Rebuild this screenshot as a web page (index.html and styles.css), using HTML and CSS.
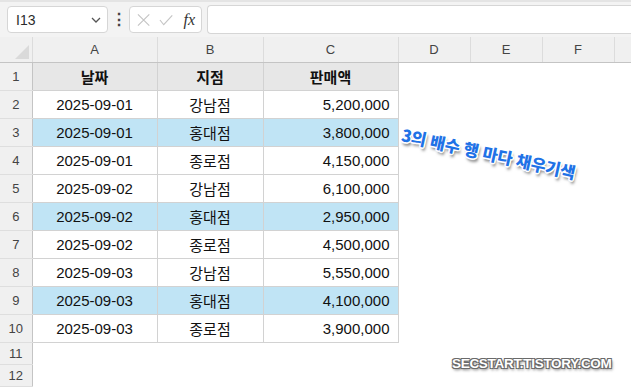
FILE: index.html
```html
<!DOCTYPE html>
<html lang="ko">
<head>
    <meta charset="UTF-8">
    <title>3의 배수 행 채우기</title>
    <link rel="stylesheet" href="styles.css">
</head>
<body>
    <div class="sheet">
        <div class="formula-bar">
            <div class="name-box">
                <span>I13</span>
                <svg class="chevron" width="10" height="6" viewBox="0 0 10 6"><path d="M1 1l4 4 4-4" fill="none" stroke="#555" stroke-width="1.3"/></svg>
            </div>
            <div class="dots">&#8942;</div>
            <div class="fx-box">
                <svg width="14" height="14" viewBox="0 0 14 14"><path d="M1 1l12 12M13 1L1 13" stroke="#c4c4c4" stroke-width="1.2"/></svg>
                <svg width="15" height="12" viewBox="0 0 15 12"><path d="M1 6l4 5L14 1" fill="none" stroke="#c4c4c4" stroke-width="1.2"/></svg>
                <span class="fx">fx</span>
            </div>
            <div class="formula-input"></div>
        </div>

        <table class="grid">
            <colgroup>
                <col class="c-rh">
                <col class="c-a">
                <col class="c-b">
                <col class="c-c">
                <col class="c-d">
                <col class="c-d">
                <col class="c-d">
                <col>
            </colgroup>
            <thead>
                <tr class="col-head">
                    <th class="corner"><span class="tri"></span></th>
                    <th>A</th><th>B</th><th>C</th><th>D</th><th>E</th><th>F</th><th></th>
                </tr>
            </thead>
            <tbody>
                <tr>
                    <th>1</th>
                    <td class="cell title">날짜</td><td class="cell title">지점</td><td class="cell title">판매액</td>
                    <td></td><td></td><td></td><td></td>
                </tr>
                <tr>
                    <th>2</th>
                    <td class="cell">2025-09-01</td><td class="cell">강남점</td><td class="cell num">5,200,000</td>
                    <td></td><td></td><td></td><td></td>
                </tr>
                <tr class="hl">
                    <th>3</th>
                    <td class="cell">2025-09-01</td><td class="cell">홍대점</td><td class="cell num">3,800,000</td>
                    <td></td><td></td><td></td><td></td>
                </tr>
                <tr>
                    <th>4</th>
                    <td class="cell">2025-09-01</td><td class="cell">종로점</td><td class="cell num">4,150,000</td>
                    <td></td><td></td><td></td><td></td>
                </tr>
                <tr>
                    <th>5</th>
                    <td class="cell">2025-09-02</td><td class="cell">강남점</td><td class="cell num">6,100,000</td>
                    <td></td><td></td><td></td><td></td>
                </tr>
                <tr class="hl">
                    <th>6</th>
                    <td class="cell">2025-09-02</td><td class="cell">홍대점</td><td class="cell num">2,950,000</td>
                    <td></td><td></td><td></td><td></td>
                </tr>
                <tr>
                    <th>7</th>
                    <td class="cell">2025-09-02</td><td class="cell">종로점</td><td class="cell num">4,500,000</td>
                    <td></td><td></td><td></td><td></td>
                </tr>
                <tr>
                    <th>8</th>
                    <td class="cell">2025-09-03</td><td class="cell">강남점</td><td class="cell num">5,550,000</td>
                    <td></td><td></td><td></td><td></td>
                </tr>
                <tr class="hl">
                    <th>9</th>
                    <td class="cell">2025-09-03</td><td class="cell">홍대점</td><td class="cell num">4,100,000</td>
                    <td></td><td></td><td></td><td></td>
                </tr>
                <tr>
                    <th>10</th>
                    <td class="cell">2025-09-03</td><td class="cell">종로점</td><td class="cell num">3,900,000</td>
                    <td></td><td></td><td></td><td></td>
                </tr>
                <tr class="short">
                    <th>11</th>
                    <td></td><td></td><td></td><td></td><td></td><td></td><td></td>
                </tr>
                <tr class="short">
                    <th>12</th>
                    <td></td><td></td><td></td><td></td><td></td><td></td><td></td>
                </tr>
            </tbody>
        </table>

        <div class="note">3의 배수 행 마다 채우기색</div>
        <div class="watermark">SECSTART.TISTORY.COM</div>
    </div>
</body>
</html>
```

FILE: styles.css
```css
html, body {
    margin: 0;
    height: 100%;
    overflow: hidden;
    background-color: #fff;
    font-family: "Liberation Sans", "Noto Sans CJK KR", sans-serif;
    color: #111;
}

.sheet {
    position: relative;
    width: 631px;
    height: 387px;
    overflow: hidden;
}

/* formula bar */
.formula-bar {
    display: flex;
    align-items: center;
    height: 35px;
    padding: 0 0 0 7px;
    background-color: #f3f3f3;
    border-top: 2px solid #e4e4e4;
}

.name-box {
    display: flex;
    align-items: center;
    justify-content: space-between;
    width: 101px;
    height: 27px;
    padding: 0 6px 0 8px;
    box-sizing: border-box;
    background-color: #fff;
    border: 1px solid #d6d6d6;
    border-radius: 4px;
    font-size: 14px;
    color: #2b2b2b;
}

.chevron {
    margin-top: 1px;
}

.dots {
    width: 21px;
    text-align: center;
    font-size: 16px;
    font-weight: bold;
    color: #444;
}

.fx-box {
    display: flex;
    align-items: center;
    gap: 9px;
    width: 73px;
    height: 27px;
    padding: 0 6px 0 7px;
    box-sizing: border-box;
    background-color: #fff;
    border: 1px solid #d6d6d6;
    border-radius: 4px;
}

.fx {
    font-family: "Liberation Serif", serif;
    font-style: italic;
    font-size: 16px;
    color: #333;
    margin-left: 1px;
}

.formula-input {
    flex: 1;
    height: 27px;
    margin-left: 5px;
    background-color: #fff;
    border: 1px solid #d6d6d6;
    border-right: none;
    border-radius: 4px 0 0 4px;
}

/* grid */
.grid {
    border-collapse: collapse;
    table-layout: fixed;
    width: 640px;
}

.c-rh { width: 32px; }
.c-a { width: 125px; }
.c-b { width: 106px; }
.c-c { width: 135px; }
.c-d { width: 72px; }

.grid th {
    background-color: #f0f0f0;
    font-weight: normal;
    color: #444;
    padding: 0;
}

.col-head th {
    height: 25px;
    font-size: 13px;
    border-right: 1px solid #dcdcdc;
    border-bottom: 1px solid #c4c4c4;
}

.corner {
    position: relative;
}

.tri {
    position: absolute;
    right: 3px;
    bottom: 3px;
    width: 0;
    height: 0;
    border-left: 14px solid transparent;
    border-bottom: 14px solid #dadada;
}

tbody th {
    font-size: 13px;
    border-right: 1px solid #c4c4c4;
    border-bottom: 1px solid #dedede;
}

tbody tr {
    height: 28px;
}

tbody tr.short {
    height: 22px;
}

.grid td {
    padding: 0;
    font-size: 15px;
    white-space: nowrap;
}

.cell {
    text-align: center;
    border: 1px solid #d2d2d2;
}

.cell.num {
    text-align: right;
    padding-right: 8px;
}

.cell.title {
    background-color: #e7e7e7;
    font-weight: bold;
}

.hl .cell {
    background-color: #c0e4f5;
}

/* overlays */
.note {
    position: absolute;
    left: 402px;
    top: 122px;
    transform: rotate(12.5deg);
    transform-origin: left center;
    font-family: "Noto Sans CJK KR", sans-serif;
    font-size: 16.5px;
    font-weight: 900;
    color: #1f72e6;
    white-space: nowrap;
    letter-spacing: -0.2px;
    text-shadow:
        -1px -1px 0 #fff, 1px -1px 0 #fff, -1px 1px 0 #fff, 1px 1px 0 #fff,
        0 -1.5px 0 #fff, 0 1.5px 0 #fff, -1.5px 0 0 #fff, 1.5px 0 0 #fff,
        2px 3px 3px rgba(0, 0, 0, 0.55);
}

.watermark {
    position: absolute;
    left: 452px;
    top: 356px;
    font-size: 13.5px;
    font-weight: bold;
    color: #fff;
    letter-spacing: -0.3px;
    text-shadow:
        -1px -1px 0 #6a6a6a, 1px -1px 0 #6a6a6a, -1px 1px 0 #6a6a6a, 1px 1px 0 #6a6a6a,
        1px 2px 3px rgba(0, 0, 0, 0.6);
}
```
